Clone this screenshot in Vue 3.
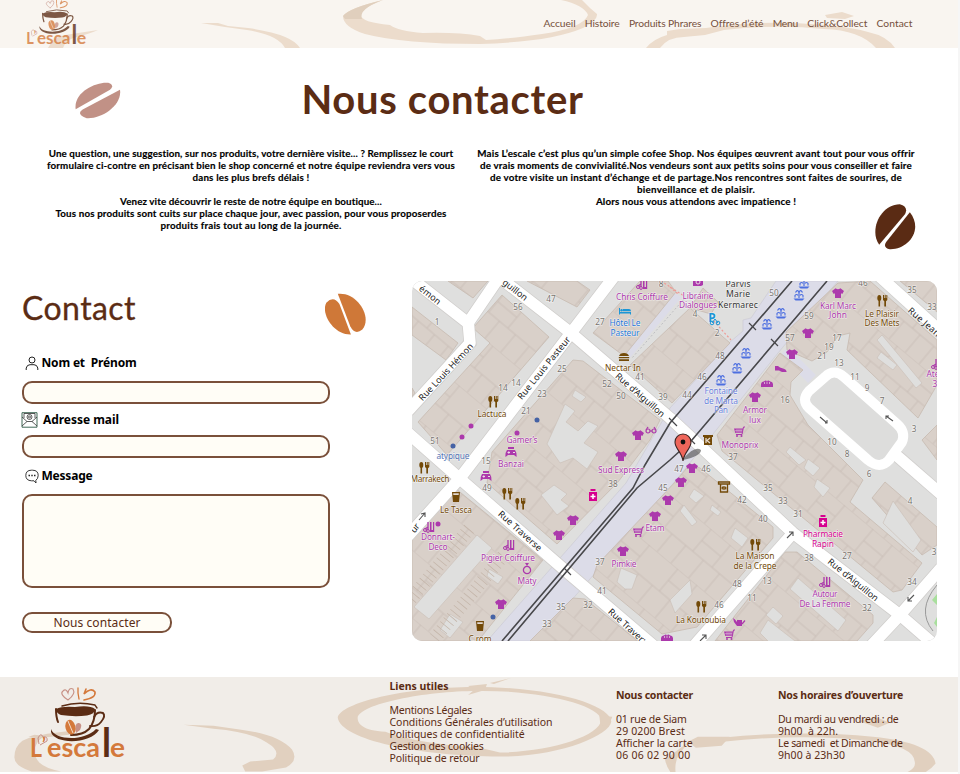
<script setup>
// Tracks a line of text so that it fills the given measure in pixels.
const fit = (el, { value }) => {
  el.style.letterSpacing = '0px'
  const natural = el.getBoundingClientRect().width
  el.style.letterSpacing = (value - natural) / el.textContent.length + 'px'
}
const vFit = { mounted: fit }

const nav = [['Accueil', 32], ['Histoire', 35], ['Produits Phrares', 72.5], ['Offres d’été', 52.5], ['Menu', 25.5], ['Click&Collect', 60], ['Contact', 36]]
const left = [
  ['Une question, une suggestion, sur nos produits, votre dernière visite... ? Remplissez le court', 405],
  ['formulaire ci-contre en précisant bien le shop concerné et notre équipe reviendra vers vous', 408],
  ['dans les plus brefs délais !', 117], ['', 0],
  ['Venez vite découvrir le reste de notre équipe en boutique...', 262],
  ['Tous nos produits sont cuits sur place chaque jour, avec passion, pour vous proposerdes', 391],
  ['produits frais tout au long de la journée.', 181]
]
const right = [
  ['Mais L’escale c’est plus qu’un simple cofee Shop. Nos équipes œuvrent avant tout pour vous offrir', 437],
  ['de vrais moments de convivialité.Nos vendeurs sont aux petits soins pour vous conseiller et faire', 432],
  ['de votre visite un instant d’échange et de partage.Nos rencontres sont faites de sourires, de', 412],
  ['bienveillance et de plaisir.', 118],
  ['Alors nous vous attendons avec impatience !', 200]
]
const footer = [
  { cls: 'links', title: ['Liens utiles', 59], lines: [['Mentions Légales', 82.5], ['Conditions Générales d’utilisation', 163], ['Politiques de confidentialité', 135], ['Gestion des cookies', 94], ['Politique de retour', 90]] },
  { cls: 'address', title: ['Nous contacter', 77], lines: [['01 rue de Siam', 70.5], ['29 0200 Brest', 69], ['Afficher la carte', 76.5], ['06 06 02 90 00', 74.5]] },
  { cls: 'hours', title: ['Nos horaires d’ouverture', 125], lines: [['Du mardi au vendredi : de', 120.5], ['9h00  à 22h.', 60], ['Le samedi  et Dimanche de', 124.5], ['9h00 à 23h30', 67]] }
]

const buildings = [
  '412,307 458,343 446,360 412,335', '448,281 488,281 473,298',
  '502,295 549,337 447,455 418,422 490,343 473,328', '527,281 577,281 590,290 577,307',
  '640,281 668,281 676,292 624,356 593,333', '630,365 690,308 730,343 672,403',
  '573,360 583,361 660,420 650,440 618,482 557,544 487,483 492,452',
  '455,488 543,560 478,641 412,641 412,533', '690,464 700,468 773,527 773,538 697,627 662,634 593,577 597,565 677,480',
  '573,598 585,599 638,641 530,641', '785,552 797,552 873,615 873,623 857,641 715,641',
  '717,435 780,353 803,370 791,382 790,395 808,425 863,480 850,502 922,563 902,590 893,592 722,451',
  '885,482 937,527 937,545 922,555 872,498', '838,283 870,281 937,340 937,385 918,418 847,350 850,333 838,336 827,352 812,361 787,350 786,332',
  '922,440 937,425 937,460', '900,281 937,281 937,312', '412,388 415,393 412,397', '690,308 703,288 718,302 711,314'
]
const yards = [
  '565,404 575,411 566,422 578,431 588,421 598,426 584,443 598,452 587,469 573,458 560,463 547,444',
  '575,390 586,397 581,402 572,396', '541,495 554,485 567,494 561,500 569,506 557,515',
  '477,535 492,548 429,619 414,607', '489,569 503,577 498,584 487,576', '450,614 463,622 450,638 440,630',
  '621,568 637,575 632,589 625,589 617,582', '735,528 748,538 742,547 731,538', '694,489 704,496 696,503 689,497',
  '817,479 830,488 823,497 814,487', '808,459 820,468 813,476 804,468', '882,335 922,383 916,388 877,340',
  '790,447 806,460 799,465 786,452', '893,501 921,540 913,552 883,523', '768,620 804,648 775,648 760,633',
  '798,578 846,620 838,631 790,589', '670,600 690,580 692,594 675,613', '684,505 697,522 692,526 680,511',
  '773,607 783,616 776,624 766,615', '881,352 897,365 893,370 877,358', '712,505 721,512 718,516 710,510'
]
const roads = [
  'M495 274L571 333L670 418L793 533L900 615L937 647', 'M616 274L571 333L460 478L408 536',
  'M408 276L468 323L500 276', 'M468 320L470 343L408 411', 'M408 433L459 478L567 572L655 647',
  'M793 533L693 647', 'M941 568L900 615L870 647', 'M877 274L941 332', 'M896 455L941 494'
]

// [kind, x, y, colour]
const P = '#ac39ac', B = '#734a08', K = '#d6008f', F = '#4d6fe0'
const icons = [
  ['shirt', 638, 435, P], ['shirt', 621, 456, P], ['shirt', 838, 293, P], ['shirt', 808, 333, P], ['shirt', 792, 354, P], ['shirt', 755, 397, P],
  ['shirt', 692, 468, P], ['shirt', 681, 482, P], ['shirt', 668, 500, P], ['shirt', 655, 516, P], ['shirt', 623, 551, P], ['shirt', 573, 520, P], ['shirt', 559, 535, P], ['shirt', 501, 604, P],
  ['fork', 493, 402, B], ['fork', 424, 468, B], ['fork', 507, 494, B], ['fork', 520, 504, B], ['fork', 882, 301, B], ['fork', 755, 545, B], ['fork', 701, 607, B],
  ['fountain', 804, 283, F], ['fountain', 799, 295, F], ['fountain', 781, 313, F], ['fountain', 767, 324, F], ['fountain', 746, 353, F], ['fountain', 737, 368, F], ['fountain', 721, 380, F],
  ['cart', 739, 432, P], ['cart', 638, 532, P], ['cart', 729, 635, P], ['can', 739, 622, P], ['cup', 456, 497, B], ['cup', 480, 626, B],
  ['pharm', 593, 495, K], ['pharm', 823, 521, K], ['salon', 642, 284, P], ['salon', 429, 527, P], ['salon', 509, 545, P], ['salon', 825, 582, P], ['salon', 937, 364, P],
  ['pad', 511, 452, P], ['pad', 486, 476, P], ['ring', 527, 568, P], ['burger', 624, 357, B], ['bed', 625, 311, '#1d96d6'], ['glasses', 651, 430, P],
  ['shoe', 781, 369, P], ['bread', 767, 384, P], ['bread', 667, 638, P], ['book', 698, 282, P], ['k', 708, 440, B], ['scroll', 724, 487, B]
]
const dots = [[471, 426, P], [462, 437, P], [453, 446, '#4562a5'], [537, 420, '#4562a5'], [517, 433, P], [438, 524, P], [493, 617, '#4562a5']]
// [text, centre x, baseline, width, colour]
const labels = [
  ['Chris Coiffure', 642, 300, 52, P], ['Hôtel Le', 625, 326, 31, '#2878d8'], ['Pasteur', 625, 336, 29, '#2878d8'], ['Nectar In', 623, 371, 36, B],
  ['Lactuca', 492, 417, 29, B], ['Gamer’s', 522, 443, 31, P], ['Banzai', 511, 467, 26, P], ['atypique', 453, 459, 33, '#5573b5'], ['Marrakech', 430, 482, 39, B],
  ['Sud Express', 621, 473, 46, P], ['Le Tasca', 456, 513, 32, B], ['Donnart-', 438, 540, 34, P], ['Deco', 438, 550, 19, P], ['Pigier Coiffure', 508, 561, 54, P], ['Maty', 527, 584, 19, P],
  ['Etam', 655, 531, 19, P], ['Pimkie', 624, 567, 25, P], ['Librairie', 698, 299, 31, P], ['Dialogues', 698, 308, 38, P], ['Karl Marc', 838, 309, 36, P], ['John', 838, 318, 18, P],
  ['Le Plaisir', 882, 317, 34, B], ['Des Mets', 882, 326, 35, B], ['Fontaine', 721, 394, 33, '#6b82dc'], ['de Marta', 721, 404, 34, '#6b82dc'], ['Pan', 721, 413, 14, '#6b82dc'],
  ['Armor', 755, 413, 24, P], ['lux', 755, 423, 12, P], ['Monoprix', 740, 448, 37, P], ['Pharmacie', 823, 537, 40, K], ['Rapin', 823, 547, 22, K],
  ['La Maison', 755, 559, 39, B], ['de la Crepe', 755, 569, 43, B], ['Autour', 825, 597, 25, P], ['De La Femme', 825, 607, 51, P], ['La Koutoubia', 701, 623, 50, B],
  ['C.rom', 480, 642, 23, B], ['Ate', 933, 377, 13, P], ['3', 935, 387, 5, P]
]
const numbers = [
  [1, 437, 325], [56, 518, 310], [47, 551, 302], [27, 600, 325], [14, 503, 391], [14, 516, 386], [25, 562, 372], [23, 542, 397], [21, 526, 414], [51, 435, 444], [15, 486, 464], [49, 487, 491],
  [52, 607, 387], [50, 621, 399], [41, 640, 380], [39, 663, 400], [8, 661, 287], [50, 774, 296], [4, 695, 317], [2, 717, 336], [48, 720, 359], [46, 702, 380], [44, 687, 398],
  [59, 809, 319], [57, 790, 341], [17, 837, 341], [19, 829, 350], [21, 822, 359], [13, 839, 366], [11, 855, 380], [9, 867, 391], [7, 882, 404], [3, 914, 432], [16, 785, 403], [10, 832, 445], [8, 847, 457],
  [37, 733, 460], [46, 863, 286], [35, 912, 293], [33, 932, 310], [38, 613, 487], [45, 663, 491], [37, 600, 565], [41, 602, 594], [32, 588, 608], [35, 561, 610], [33, 547, 627],
  [47, 679, 472], [46, 706, 472], [35, 768, 491], [33, 783, 504], [31, 798, 517], [42, 742, 503], [40, 763, 522], [6, 869, 477], [4, 910, 504], [38, 809, 561], [27, 847, 559], [34, 912, 585], [32, 867, 611], [48, 737, 587], [13, 767, 584], [11, 752, 601], [46, 719, 608], [3, 934, 555]
]
// [text, centre x, centre y, angle, width]
const streets = [
  ['émon', 430, 295, 38, 25], ['guillon', 515, 290, 38, 29], ['Rue Louis Hémon', 446, 372, -47, 75], ['Rue Louis Pasteur', 544, 368, -51, 78],
  ['Rue d’Aiguillon', 640, 395, 41, 62], ['Rue Traverse', 520, 531, 42, 55], ['Rue Traver:', 627, 626, 42, 47], ['Rue d’Aiguillon', 853, 580, 39, 62],
  ['Rue Jean', 924, 322, 41, 39], ['ur', 415, 528, -50, 9]
]
</script>

<template>
  <svg class="defs" width="0" height="0">
    <defs>
      <symbol id="logo" viewBox="0 0 96 73">
        <g fill="none" stroke-linecap="round">
          <path d="M38 14C33 11 30 7 33 5Q36 2 38 7Q39 1 43 3Q46 8 38 14" stroke="#c79186" stroke-width="1.1" />
          <path d="M48 2V7L49 13" stroke="#d4793b" stroke-width="1.3" />
          <path d="M56 3L54 8Q61 1 65 6Q66 12 54 14" stroke="#d4793b" stroke-width="1.6" />
          <path d="M32 20Q48 15 65 19L67 22" stroke="#5b2c14" stroke-width="1.4" />
          <path d="M26 23Q26 31 28 36M65 24Q65 36 59 43Q53 49 41 49" stroke="#5b2c14" stroke-width="2" />
          <path d="M64 31Q67 25 73 27Q76 30 71 36Q67 41 60 40" stroke="#5b2c14" stroke-width="1.9" />
        </g>
        <path d="M26 23Q32 20 45 21Q60 19 65 23Q65 28 57 29.500Q44 31 31 29Q26 27 26 23" fill="#5b2c14" />
        <path d="M21 43C24 54 54 56 66 43L69 44C61 58 25 59 21 46Z" fill="#5b2c14" />
        <path d="M46 47Q44 36 49 37Q53 38 50 44Z" fill="#c79186" />
        <ellipse cx="40.500" cy="41.200" rx="5" ry="7.500" transform="rotate(-14 40.5 41.2)" fill="#d4793b" /><path d="M38 35L43 47" stroke="#f5e7da" stroke-width=".9" />
        <path d="M9 58L8 52Q11 46 13 51Q18 50 17 55L10 59" fill="none" stroke="#c79186" />
        <g class="logo-text" fill="#d4793b">
          <text x="0" y="71" font-size="26" textLength="12" lengthAdjust="spacingAndGlyphs">L</text>
          <text x="12" y="64" font-size="17">’</text>
          <text x="17" y="71" font-size="27" textLength="53" lengthAdjust="spacingAndGlyphs">esca</text>
          <text x="72" y="71" font-size="41" fill="#5b2c14" textLength="9" lengthAdjust="spacingAndGlyphs">l</text>
          <text x="80" y="71" font-size="27" textLength="15" lengthAdjust="spacingAndGlyphs">e</text>
        </g>
      </symbol>
      <g id="shirt"><path d="M-2.4-4.7Q0-3 2.4-4.7L6-2 4.3 1 3 .2V5H-3V.2L-4.3 1-6-2Z" /></g>
      <g id="fork"><ellipse cx="-2.7" cy="-3" rx="2" ry="3" /><path d="M-3.5-1H-1.9V5.5H-3.5ZM1-6H2V-3H2.7V-6H3.7V-3H4.4V-6H5.3V-1L4 .3V5.500H2.300V.3L1-1Z" /></g>
      <g id="fountain"><path d="M-5.5 3.500H5.500L3.500 5.500H-3.500ZM-.6-4H.6V3H-.6Z" /><path d="M-4 2.500V.3Q-2.200-1.500-1 .5M4 2.500V.3Q2.200-1.500 1 .5M-3.500-2.500Q-1.500-6 0-3Q1.500-6 3.500-2.500" fill="none" stroke="currentColor" stroke-width="1.1" /></g>
      <g id="cart"><path d="M-5-3.5H4L3 1H-3.7Z" /><path d="M6-5H4.5L3 2.5H-3" fill="none" stroke="currentColor" /><circle cx="-2" cy="4" r="1" /><circle cx="2.5" cy="4" r="1" /><path d="M-4-1.3H3M-2-3V1M0-3V1M2-3V1" stroke="#e6d9e0" stroke-width=".5" /></g>
      <g id="can"><path d="M-6-4L-4-2.500-2 0V-2H3V4H-2L-5 0Z" /><path d="M3 2L6-1.500" stroke="currentColor" stroke-width="1.2" /></g>
      <g id="cup"><path d="M-4-5H4L3 5H-3Z" /><path d="M-2.8-3.7H2.8L2.7-2H-2.7Z" fill="#e3d9d0" /></g>
      <g id="pharm"><path d="M-2.5-6H2.5V-4H-2.5ZM-4-3H4V6H-4Z" /><path d="M0-1V4M-2.5 1.5H2.5" stroke="#fff" stroke-width="1.5" /></g>
      <g id="salon"><path d="M1-5H2.5V5H1ZM4-5H5.2V5H4ZM1 3H5V5H1Z" /><path d="M-1-5V3M-1 0L-4 2" stroke="currentColor" stroke-width="1.3" /><circle cx="-4" cy="3" r="1.5" fill="none" stroke="currentColor" /><circle cx="-1" cy="4" r="1.4" fill="none" stroke="currentColor" /></g>
      <g id="pad"><path d="M-4-2H4Q6 1 5.5 5L3 3H-3L-5.5 5Q-6 1-4-2M-3-5H3V-3H-3Z" /><path d="M-3.5.5H-1M-2.2-.7V1.7M2 .5H4" stroke="#eadde4" /></g>
      <g id="ring"><circle cy="2" r="3.6" fill="none" stroke="currentColor" stroke-width="1.3" /><path d="M-2-5H2L0-2Z" /></g>
      <g id="burger"><path d="M-5-1Q-4-4 0-4T5-1ZM-5.2 0H5.2V1.3H-5.2ZM-5 2.2H5V4H-5Z" /></g>
      <g id="bed"><path d="M-6-3H-5V1H6V3.5H5V2.5H-5V3.5H-6ZM-2-2H4Q6-2 6 .3H-2Z" /><circle cx="-3.4" cy="-.8" r="1.2" /></g>
      <g id="glasses" fill="none" stroke="currentColor" stroke-width="1.2"><circle cx="-3" cy="1" r="2" /><circle cx="3" cy="1" r="2" /><path d="M-1 1H1M-5 0L-3-3M5 0L3-3" /></g>
      <g id="shoe"><path d="M-6-3H-3L-1-1.500 2-.500Q5 0 5.500 2V3H1L-2 1.500H-6Z" /></g>
      <g id="bread"><path d="M-6 3V0Q-5.500-3-3-2.500Q-1.500-4 0-3Q1.500-4 3-2.500Q5.500-3 6 0V3Z" /><path d="M-2.500-2V0M0-2.500V0M2.500-2V0" stroke="#e6d9e0" stroke-width=".7" /></g>
      <g id="book"><path d="M-5-4H5V3L3 4H-5Z" /><circle cy="0" r="2" fill="none" stroke="#e6d9e0" /></g>
      <g id="k"><path d="M-5-5H5V-3H4V5H-4V-3H-5Z" /><path d="M-2-2V3M2-2L-1 .5 2 3" stroke="#e6d9cc" fill="none" stroke-width="1.3" /></g>
      <g id="scroll" fill="none" stroke="currentColor" stroke-width="1.3"><path d="M-5.500-5H5.500V-3H-5.500ZM-3.500-3V5H3.500V-3" /><ellipse cy="1" rx="2" ry="1" /></g>
    </defs>
  </svg>

  <div class="page">
    <header>
      <svg class="stain" viewBox="0 0 957 48" fill="#ecdccc">
        <path d="M48 48Q54 36 65 35L98 30Q92 33 77 37Q66 39 63 48ZM103 28L106 29Z" />
        <path d="M201 23L218 23L228 26L248 28Q292 34 300 48H285Q278 35 247 30L225 27Z" />
        <path d="M383 0Q349 8 343 16Q343 27 365 34Q403 44 480 44Q550 42 583 28Q598 20 597 14L590 8 582 0H561Q584 5 588 15Q583 28 542 34Q508 39 486 40L480 36Q458 32 423 33Q398 31 390 25Q359 22 361 14Q364 7 383 0Z" fill-rule="evenodd" />
        <path d="M646 48Q653 39 667 35L667 31 680 29 706 28Q746 22 785 23Q840 24 868 32Q887 36 895 48H876Q860 30 824 29Q776 24 724 30L705 35 684 37Q668 37 660 48Z" />
        <path d="M825 15L842 12 854 16 845 19 827 18Z" /><path d="M383 0Q349 8 343 16L345 19H362Q358 9 383 0Z" fill="#e0cfbd" />
      </svg>
      <svg class="logo-small"><use href="#logo" /></svg>
      <nav><a v-for="n in nav" :key="n[0]" v-fit="n[1]">{{ n[0] }}</a></nav>
    </header>

    <section class="title-row">
      <svg class="bean-pink" viewBox="225 246 138 110" fill="#c19186"><path d="M227 327C220 275 290 244 325 248Q345 255 330 269Z" /><path d="M360 269C367 315 305 357 260 354Q227 342 248 328Z" /></svg>
      <h1><span v-fit="282">Nous contacter</span></h1>
    </section>

    <section class="intro">
      <div><p v-for="(l, i) in left" :key="i"><span v-if="l[0]" v-fit="l[1]">{{ l[0] }}</span></p></div>
      <div class="intro-right">
        <p v-for="(l, i) in right" :key="i"><span v-fit="l[1]">{{ l[0] }}</span></p>
        <svg class="bean-dark" viewBox="1184 192 122 138" fill="#5a2b14"><path d="M1196 314C1165 270 1200 194 1258 193Q1284 200 1274 222Z" /><path d="M1288 217C1331 272 1280 330 1228 328Q1206 322 1217 306Z" /></svg>
      </div>
    </section>

    <main>
      <form @submit.prevent>
        <div class="form-head">
          <h2><span v-fit="114">Contact</span></h2>
          <svg class="bean-orange" viewBox="974 459 125 127" fill="#cf7838"><path d="M1053 585C1000 587 960 520 978 488Q1000 465 1018 492Z" /><path d="M1013 461C1070 454 1120 530 1088 570Q1065 588 1051 560Z" /></svg>
        </div>
        <label class="label-name">
          <svg width="14" height="15" viewBox="0 0 14 15" fill="none" stroke="#222"><circle cx="7" cy="4" r="3" /><path d="M1.2 14V12Q2 8.7 5 8.7H9Q12 8.7 12.8 12V14" /></svg>
          <span v-fit="95">Nom et&nbsp; Prénom</span>
        </label>
        <input type="text">
        <label class="label-mail">
          <svg width="17" height="16" viewBox="0 0 17 16" fill="none" stroke="#333"><path d="M1 .7H16V15.2H1Z" stroke="#416957" /><path d="M3 6V1.5H14V6M1 5L6 9.5 11 9.5 16 5M1 14L6 9.5M16 14L11 9.5" stroke-width=".8" /><circle cx="8.5" cy="5" r="2.5" stroke-width=".8" /><circle cx="8.5" cy="5" r="1" stroke-width=".8" /></svg>
          <span v-fit="76">Adresse mail</span>
        </label>
        <input type="text">
        <label class="label-msg">
          <svg width="14" height="15" viewBox="0 0 14 15" fill="none" stroke="#222"><path d="M9 11.800H6.500Q.8 11.500.8 6.500Q.8 1.200 6.500 1.200H7.500Q13.200 1.200 13.200 6.500Q13 10 10.800 11.300L11 14 9 11.800" stroke-width=".9" /><path d="M3.500 6.500H5M6.300 6.500H7.700M9 6.500H10.500" stroke-width="1.3" /></svg>
          <span v-fit="51">Message</span>
        </label>
        <textarea></textarea>
        <button><span v-fit="87">Nous contacter</span></button>
      </form>

      <svg class="map" viewBox="412 281 525 360">
        <defs>
          <pattern id="plots" width="62" height="52" patternUnits="userSpaceOnUse" patternTransform="rotate(40)">
            <rect width="62" height="52" fill="#d9d0c9" />
            <path d="M0 0H62M0 29H62M17 0V29M42 0V29M8 29V52M31 29V52M52 29V52M17 15H42" fill="none" stroke="#c6bab0" stroke-width=".7" />
          </pattern>
          <clipPath id="lot"><path d="M453 490L543 560 478 641H412V533Z" /></clipPath>
        </defs>
        <rect x="412" y="281" width="525" height="360" fill="#dfdfde" />
        <path d="M776 281H838L778 353 713 434 677 479 536 641H487L626 483 670 408 730 342 743 331V320L751 318Z" fill="#dcdce8" stroke="#c9c8d2" stroke-width=".6" />
        <path d="M677 294L626 354M784 351L812 379" stroke="#dcdce8" stroke-width="11" />
        <path d="M671 290L621 351M684 299L632 358" stroke="#aaa9b0" stroke-width=".6" stroke-dasharray="2" />
        <polygon v-for="b in buildings" :key="b" :points="b" fill="url(#plots)" stroke="#c6bab0" stroke-width=".8" />
        <polygon v-for="y in yards" :key="y" :points="y" fill="#dfdfde" stroke="#c9beb6" stroke-width=".6" />
        <path d="M503 556L435 638M469 529L410 600" stroke="#c3b4a8" stroke-width="13" stroke-dasharray=".7 4.6" fill="none" clip-path="url(#lot)" />
        <path d="M661 281L684 296M711 318L731 340M670 287L678 294" stroke="#ee9a95" stroke-width="1.2" stroke-dasharray="2 2" />
        <path v-for="r in roads" :key="r" :d="r" fill="none" stroke="#d0cecc" stroke-width="13" />
        <g fill="none" stroke="#fff" stroke-width="11.5" stroke-linejoin="round">
          <path v-for="r in roads" :key="r" :d="r" />
          <path d="M825 377L809 391Q801 400 809 408L868 460Q880 470 889 460L902 442Q906 432 897 424L844 377Q834 368 825 377Z" fill="#dddddc" stroke-width="10" />
        </g>
        <path d="M937 585Q916 610 933 631" fill="none" stroke="#999" /><path d="M937 594L932 600 937 605M937 617L934 623 937 627" fill="#a9df9d" />
        <g fill="none" stroke="#48484b" stroke-width="1.6">
          <path d="M792 281L670 423 645 465 633 488 502 641" /><path d="M827 281L692 440 670 460 637 488 508 641" />
          <path d="M749 323L756 330M771 339L778 346M669 418L677 426M688 437L695 444M564 568L571 575" stroke-width="1.2" />
        </g>
        <g fill="none" stroke="#555" stroke-width="1.1"><path d="M820 417L827 423M825 423L827 423 827 420M893 421L886 416M886 419V416L889 416M787 538L793 532M789 532H793V536M914 595L908 601M908 597V601H912M700 641L706 635M702 635H706V639M419 520L425 513M421 514L425 513 425 517" /></g>
        <g v-for="(i, n) in icons" :key="n" :transform="`translate(${i[1]} ${i[2]})`" :fill="i[3]" :color="i[3]"><use :href="'#' + i[0]" /></g>
        <circle v-for="(d, n) in dots" :key="'d' + n" :cx="d[0]" :cy="d[1]" r="2.5" :fill="d[2]" />
        <g class="map-text">
          <text v-for="(n, i) in numbers" :key="'n' + i" :x="n[1]" :y="n[2]" fill="#77736f" font-size="8.2">{{ n[0] }}</text>
          <text v-for="(l, i) in labels" :key="'l' + i" :x="l[1]" :y="l[2]" :fill="l[4]" :textLength="l[3]" font-size="8.4">{{ l[0] }}</text>
          <text v-for="(s, i) in streets" :key="'s' + i" :transform="`translate(${s[1]} ${s[2]}) rotate(${s[3]})`" y="3" fill="#222" :textLength="s[4]" font-size="9">{{ s[0] }}</text>
          <g fill="#333" font-size="8.6"><text x="738" y="287" textLength="25">Parvis</text><text x="738" y="297" textLength="24">Marie</text><text x="738" y="308" textLength="40">Kermarec</text></g>
          <text x="712" y="322" font-size="12" font-weight="bold" fill="#1d96d6">P</text>
        </g>
        <g fill="none" stroke="#1d96d6"><circle cx="712" cy="323" r="1.8" /><circle cx="718" cy="323" r="1.8" /><path d="M712 323L715 319 718 323" /></g>
        <path d="M683 459Q695 445 701 450Q701 456 683 460" fill="#555" opacity=".65" />
        <path d="M683 461C682 452 675 449 675 442A8 8 0 0 1 691 442C691 449 684 452 683 461Z" fill="#ef665b" stroke="#3d2523" stroke-width="1.1" /><circle cx="683" cy="442" r="2.4" fill="#111" />
      </svg>
    </main>

    <footer>
      <svg class="stain" viewBox="0 677 957 95" fill="#e1d0bf">
        <path d="M26 737L32 735 42 736Q25 749 37 763Q43 769 59 772H29Q11 766 12 757Q12 747 20 741L27 738L45 734L69 731L67 735L40 738Z" />
        <path d="M182 725L212 726 240 730Q278 735 291 750Q298 761 285 768L261 772H244L241 766 249 762 272 760Q281 752 266 743Q249 732 212 729Z" />
        <path d="M474 687C405 687 339 703 337 718C340 740 420 757 500 757C560 757 610 736 612 722C612 706 555 687 474 687ZM477 691C540 690 600 705 602 720C600 737 550 752 500 753L480 748C445 746 405 740 385 732C362 731 357 724 357 718C359 704 425 691 477 691Z" fill-rule="evenodd" />
        <path d="M468 695L474 690 468 686 487 684 485 690ZM478 677L487 681ZM490 683L511 678 494 684ZM600 716L613 717 609 727 601 725ZM689 742L699 737 731 737 723 746 697 748ZM860 721L880 718 892 723 880 728Z" />
        <path d="M690 742L666 760Q668 771 678 780Q674 765 680 755ZM723 738Q805 730 875 737Q935 743 938 764Q932 772 917 778L890 778Q920 773 917 762Q916 747 876 742Q810 733 724 742ZM849 782L865 777 881 780 899 784Z" />
      </svg>
      <svg class="logo-large"><use href="#logo" /></svg>
      <div v-for="c in footer" :key="c.cls" class="col" :class="c.cls">
        <h3><span v-fit="c.title[1]">{{ c.title[0] }}</span></h3>
        <p v-for="l in c.lines" :key="l[0]"><span v-fit="l[1]">{{ l[0] }}</span></p>
      </div>
    </footer>
  </div>
</template>

<style>
html { background: #f6f6f6; overflow: hidden; }
body { margin: 0; }
</style>

<style scoped>
* { box-sizing: border-box; }
.defs { display: block; width: 0; height: 0; position: absolute; }
.page { width: 958px; height: 774px; background: #fff; overflow: hidden; color: #000; font-family: Lato, sans-serif; }
h1, h2, h3, p { margin: 0; }
span, a { display: inline-block; white-space: pre; }
header { position: relative; display: flex; height: 48px; padding-left: 26px; overflow: hidden; background: #f9f5f0; }
.stain { position: absolute; left: 0; top: 0; width: 957px; height: 100%; }
.logo-small { position: relative; flex: none; width: 61px; height: 46px; margin-top: -1px; opacity: .78; }
.logo-text { font-family: Lato, sans-serif; font-weight: 700; }
nav { position: relative; display: flex; gap: 9.2px; margin-left: 456.5px; font-size: 10.3px; line-height: 46px; color: #76503b; }
.title-row { display: flex; height: 99px; padding: 34px 0 0 75px; }
.bean-pink { width: 46px; height: 37px; }
h1 { margin: -3px 0 0 180.5px; font-size: 40px; line-height: 40px; font-weight: 700; color: #5b2c14; }
.intro { display: grid; grid-template-columns: 408px 438px; column-gap: 22px; height: 134px; padding-left: 47px; text-align: center; font-size: 9.8px; font-weight: 700; line-height: 12px; -webkit-text-stroke: .15px #000; }
.intro p { height: 12px; display: flex; justify-content: center; }
.intro-right { display: flex; flex-direction: column; }
.bean-dark { align-self: flex-end; width: 41px; height: 46px; margin: -3px -0.5px 0 0; }
main { display: grid; grid-template-columns: 390px 525px; height: 396px; padding-left: 22px; }
form { display: flex; flex-direction: column; align-items: flex-start; color: #000; font-family: "Noto Sans", sans-serif; }
.form-head { display: flex; justify-content: space-between; width: 344px; height: 74px; padding-top: 12px; }
h2 { font: 400 32px/30px Lato, sans-serif; color: #5b2c14; -webkit-text-stroke: .3px #5b2c14; }
.bean-orange { width: 41px; height: 42px; }
label { display: flex; align-items: center; height: 16px; font-size: 12px; line-height: 16px; font-weight: 700; }
.label-name { padding-left: 2.5px; gap: 3px; }
.label-mail { gap: 5px; margin: 8px 0 7px -1px; }
.label-msg { padding-left: 2.5px; gap: 3px; margin: 10px 0; }
input, textarea, button { display: block; width: 308px; border: 2px solid #7a503a; border-radius: 10px; background: #fffdf6; resize: none; padding: 0; outline: 0; }
input { height: 23px; }
.label-name + input { margin-top: 10px; }
textarea { height: 94px; }
button { width: 150px; height: 21px; margin-top: 24px; color: #5b2c14; font: 12px/17px "Noto Sans", sans-serif; }
.map { display: block; width: 525px; height: 360px; border-radius: 10px; }
.map-text { font-family: "Noto Sans", sans-serif; text-anchor: middle; paint-order: stroke; stroke: #ffffffa0; stroke-width: 1.2px; }
footer { position: relative; display: grid; grid-template-columns: 359.5px 226.5px 162px 180px; height: 94.5px; padding-left: 30px; overflow: hidden; background: #f1ede8; color: #5b2c14; font: 10.5px/12px "Noto Sans", sans-serif; }
.logo-large { position: relative; width: 96px; height: 73px; margin-top: 9px; }
.col { position: relative; padding-top: 12px; }
.links { padding-top: 3px; }
h3 { font-size: 10.5px; line-height: 12px; font-weight: 700; margin-bottom: 12px; height: 12px; }
.col p { height: 12px; }
</style>
